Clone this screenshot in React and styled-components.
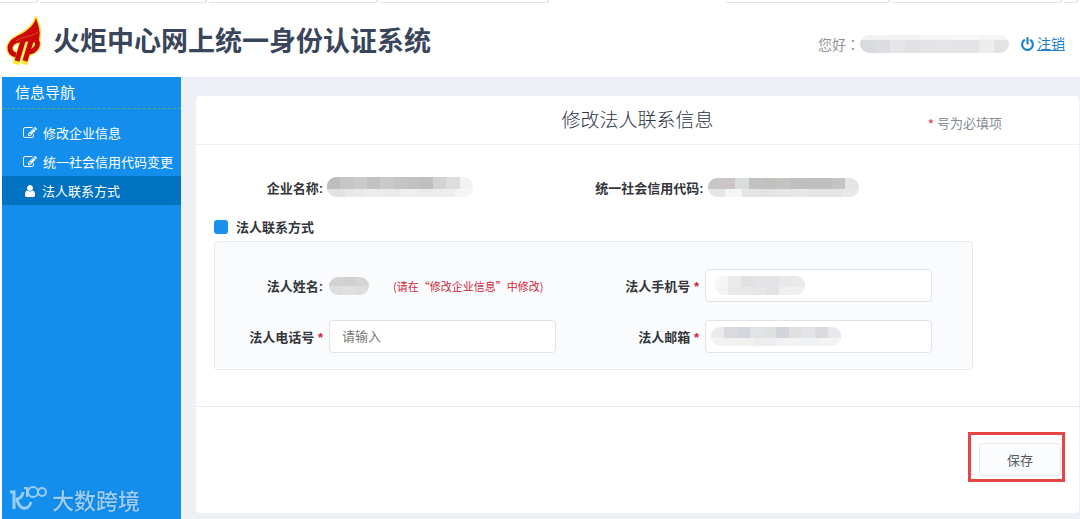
import React from "react";
import styled, { createGlobalStyle } from "styled-components";

const GlobalStyle = createGlobalStyle`
  * {
    box-sizing: border-box;
  }
  body {
    margin: 0;
    background: #fff;
    font-family: "Liberation Sans", "Noto Sans CJK SC", sans-serif;
    font-size: 13px;
    color: #333;
  }
`;

const Page = styled.div`
  display: flex;
  flex-direction: column;
  min-height: 100vh;
`;

const TabStrip = styled.div`
  display: grid;
  grid-template-columns: 40fr 169fr 171fr 171fr 175fr 166fr 172fr 16fr;
  height: 3px;
`;

const TabEdge = styled.div`
  border-bottom: 1px solid ${(props) => (props.$active ? "#fff" : "#e2e2e2")};
  border-right: 1px solid ${(props) => (props.$active ? "#fff" : "#d0d0d0")};
  border-bottom-right-radius: 3px;
  margin-right: 2px;
`;

const Header = styled.header`
  display: flex;
  align-items: center;
  justify-content: space-between;
  height: 74px;
  padding: 0 15px 0 5px;
`;

const Brand = styled.div`
  display: flex;
  align-items: center;
  gap: 10px;
`;

const BrandName = styled.h1`
  margin: 0;
  font-family: "Noto Sans CJK SC", sans-serif;
  font-size: 27px;
  line-height: 40px;
  font-weight: 700;
  color: #39455a;
`;

const UserArea = styled.div`
  display: flex;
  align-items: center;
  padding-top: 8px;
  font-family: "Noto Sans CJK TC", sans-serif;
  font-size: 14px;
  line-height: 20px;
  color: #8f9499;
`;

const Logout = styled.a`
  display: flex;
  align-items: center;
  gap: 2px;
  margin-left: 11px;
  color: #1b80cf;
  font-family: "Liberation Sans", "Noto Sans CJK SC", sans-serif;
  text-decoration: none;

  span {
    text-decoration: underline;
  }
`;

const Body = styled.div`
  display: flex;
  flex: 1;
  padding-left: 2px;
`;

const Sidebar = styled.nav`
  flex: none;
  width: 179px;
  background: #138eec;
  color: #fff;
`;

const SidebarTitle = styled.h2`
  margin: 0;
  padding-left: 13px;
  height: 32px;
  line-height: 32px;
  font-size: 15px;
  font-weight: 400;
  border-bottom: 1px dashed #57a58c;
`;

const Menu = styled.ul`
  list-style: none;
  margin: 0;
  padding: 9px 0 0;
`;

const MenuLink = styled.a`
  display: flex;
  align-items: center;
  gap: ${(props) => (props.$active ? "5px" : "6px")};
  height: 29px;
  padding-left: 21px;
  color: #fff;
  text-decoration: none;
  white-space: nowrap;
  background: ${(props) => (props.$active ? "#0072c0" : "transparent")};
`;

const Main = styled.main`
  flex: 1;
  padding: 19px 1px 6px 15px;
  background: #edf1f5;
`;

const Card = styled.form`
  display: flex;
  flex-direction: column;
  height: 100%;
  background: #fff;
  border-radius: 4px;
`;

const CardHeader = styled.div`
  display: grid;
  grid-template-columns: 1fr auto 1fr;
  align-items: center;
  height: 49px;
  border-bottom: 1px solid #edeff1;
`;

const CardTitle = styled.h3`
  grid-column: 2;
  margin: 0;
  padding-top: 2px;
  font-size: 19px;
  line-height: 28px;
  font-weight: 300;
  color: #2d3446;
`;

const RequiredNote = styled.p`
  justify-self: end;
  margin: 0;
  padding: 4px 77px 0 0;
  color: #858b94;
`;

const Star = styled.span`
  color: #d0233a;
`;

const CardBody = styled.div`
  flex: 1;
  padding: 23px 106px 36px 18px;
`;

const FormGrid = styled.div`
  display: grid;
  grid-template-columns: 108px 1fr 137px 1fr;
  column-gap: 6px;
  row-gap: 18px;
  align-items: center;
  padding-right: 40px;
`;

const SummaryGrid = styled(FormGrid)`
  grid-template-columns: 109px 1fr 147px 1fr;
  column-gap: 4px;
  height: 39px;
  padding-bottom: 1px;
`;

const Label = styled.label`
  text-align: right;
  white-space: nowrap;
  font-weight: 700;
  color: #33363a;
`;

const Section = styled.fieldset`
  margin: 0;
  padding: 0;
  border: 0;
`;

const SectionTitle = styled.legend`
  display: flex;
  align-items: center;
  gap: 8px;
  height: 34px;
  padding: 5px 0 0;
  font-weight: 700;
  color: #33363a;

  &::before {
    content: "";
    width: 14px;
    height: 14px;
    border-radius: 3px;
    background: #1b91ec;
  }
`;

const Panel = styled.div`
  padding: 27px 0 16px;
  background: #fafbfd;
  border: 1px solid #e6eaee;
  border-radius: 4px;
`;

const Value = styled.div`
  display: flex;
  align-items: center;
  gap: 24px;
  min-width: 0;
`;

const Hint = styled.span`
  font-family: "Noto Sans CJK SC", sans-serif;
  font-size: 11px;
  line-height: 16px;
  white-space: nowrap;
  color: #cf1f38;
`;

const Field = styled.div`
  display: grid;
  align-items: center;

  > * {
    grid-area: 1 / 1;
  }
`;

const Input = styled.input`
  width: 100%;
  height: 33px;
  padding: 0 12px;
  font: inherit;
  color: #333;
  background: #fff;
  border: 1px solid #dfe3ea;
  border-radius: 4px;

  &::placeholder {
    color: #777;
    opacity: 1;
  }
`;

const Mask = styled.svg`
  display: block;
  flex: none;
  margin-left: ${(props) => props.$indent || "0"};
`;

const CardFooter = styled.div`
  display: flex;
  justify-content: flex-end;
  align-items: center;
  height: 107px;
  padding: 0 14px 6px 0;
  border-top: 1px solid #e8ebee;
`;

const SaveFrame = styled.div`
  padding: 8px 1px 3px 8px;
  border: 3px solid #e64545;
`;

const SaveButton = styled.button`
  display: block;
  width: 82px;
  height: 33px;
  padding: 0;
  font: inherit;
  color: #555b66;
  background: #fafcfe;
  border: 1px solid #e4e9ed;
  border-radius: 3px;
`;

const Watermark = styled.div`
  position: fixed;
  left: 9px;
  bottom: 6px;
  display: flex;
  align-items: center;
  gap: 5px;
  font-family: "Noto Sans CJK SC", sans-serif;
  font-size: 22px;
  line-height: 28px;
  font-weight: 500;
  color: #9ccdf5;
  text-shadow: 0 0 2px #0b6fbd;
  pointer-events: none;
`;

const ICONS = {
  edit: "M888 1184l116-116-152-152-116 116v56h96v96h56zm440-720q-16-16-33 1l-350 350q-17 17-1 33t33-1l350-350q17-17 1-33zm80 594v190q0 119-84.5 203.5t-203.5 84.5h-832q-119 0-203.5-84.5t-84.5-203.5v-832q0-119 84.5-203.5t203.5-84.5h832q63 0 117 25 15 7 18 23 3 17-9 29l-49 49q-14 14-32 8-23-6-45-6h-832q-66 0-113 47t-47 113v832q0 66 47 113t113 47h832q66 0 113-47t47-113v-126q0-13 9-22l64-64q15-15 35-7t20 29zm-96-738l288 288-672 672h-288v-288zm444 132l-92 92-288-288 92-92q28-28 68-28t68 28l152 152q28 28 28 68t-28 68z",
  user: "M1536 1399q0 109-62.5 187t-150.5 78h-854q-88 0-150.5-78t-62.5-187q0-85 8.5-160.5t31.5-152 58.5-131 94-89 134.5-34.5q131 128 313 128t313-128q76 0 134.5 34.5t94 89 58.5 131 31.5 152 8.5 160.5zm-256-887q0 159-112.5 271.5t-271.5 112.5-271.5-112.5-112.5-271.5 112.5-271.5 271.5-112.5 271.5 112.5 112.5 271.5z",
  power:
    "M1664 896q0 156-61 298t-164 245-245 164-298 61-298-61-245-164-164-245-61-298q0-182 80.5-343t226.5-270q43-32 95.5-25t83.5 50q32 42 24.5 94.5t-49.5 84.5q-98 74-151.5 181t-53.5 228q0 104 40.5 198.5t109.5 163.5 163.5 109.5 198.5 40.5 198.5-40.5 163.5-109.5 109.5-163.5 40.5-198.5q0-121-53.5-228t-151.5-181q-42-32-49.5-84.5t24.5-94.5q31-43 84-50t95 25q146 109 226.5 270t80.5 343zm-640-768v640q0 52-38 90t-90 38-90-38-38-90v-640q0-52 38-90t90-38 90 38 38 90z",
};

const Icon = ({ name, size = 14 }) => (
  <svg width={size} height={size} viewBox="0 0 1792 1792" aria-hidden="true">
    <path fill="currentColor" d={ICONS[name]} />
  </svg>
);

const TORCH_STROKES = [
  "M15 26C9 26 5 30 5 34C5 38 7 40 11 41",
  "M18 27L12 47",
  "M26 27L20 47",
  "M26 27C34 22 34 33 29 36C27 38 25 38 23 38",
];

const TORCH_FLAME =
  "M31 4C29 11 24 15 18 19C13 22 7 24 5 28C12 25 15 26 17 28C22 28 30 25 33 28C35 23 35 19 34 14C33 10 32 7 31 4Z";

const TorchLogo = () => (
  <svg width="38" height="52" viewBox="0 0 38 52" aria-hidden="true">
    <g fill="none" stroke="#ffe92e" strokeLinejoin="round">
      <path d={TORCH_FLAME} fill="#ffe92e" strokeWidth="3" />
      {TORCH_STROKES.map((d) => (
        <path key={d} d={d} strokeWidth="7" strokeLinecap="square" />
      ))}
    </g>
    <path d={TORCH_FLAME} fill="#cc0606" />
    <g fill="none" stroke="#cc0606" strokeWidth="5">
      {TORCH_STROKES.map((d) => (
        <path key={d} d={d} />
      ))}
    </g>
    <path d="M11 27C18 22 27 23 33 18" fill="none" stroke="#e0571a" strokeWidth="1" />
  </svg>
);

// two rows of grey tiles that cover a private value
const Mosaic = ({ id, width, height, top, bottom, split = 0.6, indent }) => {
  const topWidth = width / top.length;
  const bottomWidth = width / bottom.length;
  const splitY = Math.round(height * split);
  return (
    <Mask width={width} height={height} $indent={indent} aria-hidden="true">
      <clipPath id={id}>
        <rect width={width} height={height} rx={Math.min(9, height / 2)} />
      </clipPath>
      <g clipPath={`url(#${id})`} shapeRendering="crispEdges">
        {top.map((fill, i) => (
          <rect key={i} x={i * topWidth} width={topWidth + 1} height={splitY} fill={fill} />
        ))}
        {bottom.map((fill, i) => (
          <rect
            key={i}
            x={i * bottomWidth}
            y={splitY}
            width={bottomWidth + 1}
            height={height - splitY}
            fill={fill}
          />
        ))}
      </g>
    </Mask>
  );
};

const menuItems = [
  { icon: "edit", text: "修改企业信息" },
  { icon: "edit", text: "统一社会信用代码变更" },
  { icon: "user", text: "法人联系方式", active: true },
];

const App = () => {
  return (
    <Page>
      <GlobalStyle />
      <TabStrip>
        {[0, 1, 2, 3, 4, 5, 6, 7].map((tab) => (
          <TabEdge key={tab} $active={tab === 4} />
        ))}
      </TabStrip>
      <Header>
        <Brand>
          <TorchLogo />
          <BrandName>火炬中心网上统一身份认证系统</BrandName>
        </Brand>
        <UserArea>
          您好：
          <Mosaic
            id="mask-user"
            width={149}
            height={18}
            split={0.3}
            top={["#f1f1f2", "#f3f3f4", "#f5f5f5", "#f7f7f7", "#f4f4f4"]}
            bottom={["#d9dadd", "#dcdde0", "#e6e6e8", "#e2e2e5", "#e3e4e6", "#e5e5e7", "#e4e4e6", "#e3e4e6", "#ededee", "#e3e3e6"]}
          />
          <Logout href="#logout">
            <Icon name="power" size={15} />
            <span>注销</span>
          </Logout>
        </UserArea>
      </Header>
      <Body>
        <Sidebar>
          <SidebarTitle>信息导航</SidebarTitle>
          <Menu>
            {menuItems.map((item) => (
              <li key={item.text}>
                <MenuLink href="#" $active={item.active}>
                  <Icon name={item.icon} />
                  {item.text}
                </MenuLink>
              </li>
            ))}
          </Menu>
        </Sidebar>
        <Main>
          <Card>
            <CardHeader>
              <CardTitle>修改法人联系信息</CardTitle>
              <RequiredNote>
                <Star>*</Star> 号为必填项
              </RequiredNote>
            </CardHeader>
            <CardBody>
              <SummaryGrid>
                <Label as="span">企业名称:</Label>
                <Value>
                  <Mosaic
                    id="mask-company"
                    width={146}
                    height={20}
                    top={["#bdbdbe", "#c6c6c8", "#cbcbcb", "#c3c2c3", "#cacacb", "#c4c4c5", "#c1c1c2", "#bebfc0", "#d2d2d3", "#dddddf", "#f2f2f2"]}
                    bottom={["#e2e2e2", "#e9e9ea", "#ececec", "#eaeaea", "#eeeeee", "#ebebec", "#ededee", "#f5f5f5"]}
                  />
                </Value>
                <Label as="span">统一社会信用代码:</Label>
                <Value>
                  <Mosaic
                    id="mask-code"
                    width={151}
                    height={19}
                    top={["#c7c7ca", "#cbc6c5", "#dadddd", "#c2c2c4", "#c0c0c1", "#c7c4bf", "#bfbfc0", "#bebebf", "#bdbebf", "#c4c4c7", "#e4e6e6"]}
                    bottom={["#e6e6e6", "#f5f5f5", "#e5e5e5", "#e3e3e3", "#e6e6e6", "#e8e8e8", "#e3e4e4", "#e4e4e4", "#e7e8e8"]}
                  />
                </Value>
              </SummaryGrid>
              <Section>
                <SectionTitle>法人联系方式</SectionTitle>
                <Panel>
                  <FormGrid>
                    <Label as="span">法人姓名:</Label>
                    <Value>
                      <Mosaic
                        id="mask-name"
                        width={40}
                        height={18}
                        split={0.5}
                        top={["#d2d2d3", "#d0d0d1", "#d4d4d4"]}
                        bottom={["#dededf", "#e0e0e1", "#dedede"]}
                      />
                      <Hint>(请在“修改企业信息”中修改)</Hint>
                    </Value>
                    <Label htmlFor="mobile">
                      法人手机号 <Star>*</Star>
                    </Label>
                    <Field>
                      <Input id="mobile" type="tel" />
                      <Mosaic
                        id="mask-mobile"
                        width={90}
                        height={19}
                        indent="10px"
                        top={["#f6f6f6", "#ebebec", "#e1e1e4", "#e3e4e6", "#e3e3e5", "#e8e8ea", "#e9e9ea"]}
                        bottom={["#f4f4f4", "#e9e9eb", "#e7e8e9", "#e6e6e8", "#e3e3e5", "#efeff0", "#f0f0f1"]}
                      />
                    </Field>
                    <Label htmlFor="phone">
                      法人电话号 <Star>*</Star>
                    </Label>
                    <Field>
                      <Input id="phone" type="tel" placeholder="请输入" />
                    </Field>
                    <Label htmlFor="email">
                      法人邮箱 <Star>*</Star>
                    </Label>
                    <Field>
                      <Input id="email" type="email" />
                      <Mosaic
                        id="mask-email"
                        width={130}
                        height={19}
                        indent="6px"
                        top={["#ebebec", "#d8dade", "#d3d6dc", "#e2e3e5", "#dfe0e2", "#d1d5db", "#e0e0e2", "#e2e4e6", "#dadade", "#e6e8ec"]}
                        bottom={["#f2f2f3", "#f1f1f2", "#ededef", "#f2f2f3", "#f0f1f2", "#f4f4f4"]}
                      />
                    </Field>
                  </FormGrid>
                </Panel>
              </Section>
            </CardBody>
            <CardFooter>
              <SaveFrame>
                <SaveButton type="button">保存</SaveButton>
              </SaveFrame>
            </CardFooter>
          </Card>
        </Main>
      </Body>
      <Watermark>
        <svg width="38" height="28" viewBox="0 0 38 28" fill="none" stroke="currentColor" aria-hidden="true">
          <path d="M1 7H5V24" strokeWidth="3" />
          <path d="M14 7C14 11 11 14 7 14C9 15 9 22 14 23C18 24 21 21 22 17" strokeWidth="3" />
          <path d="M15 3H18V12" strokeWidth="2" />
          <circle cx="24" cy="7" r="5" strokeWidth="2" />
          <circle cx="33" cy="7" r="4" strokeWidth="2" />
        </svg>
        大数跨境
      </Watermark>
    </Page>
  );
};

export default App;
